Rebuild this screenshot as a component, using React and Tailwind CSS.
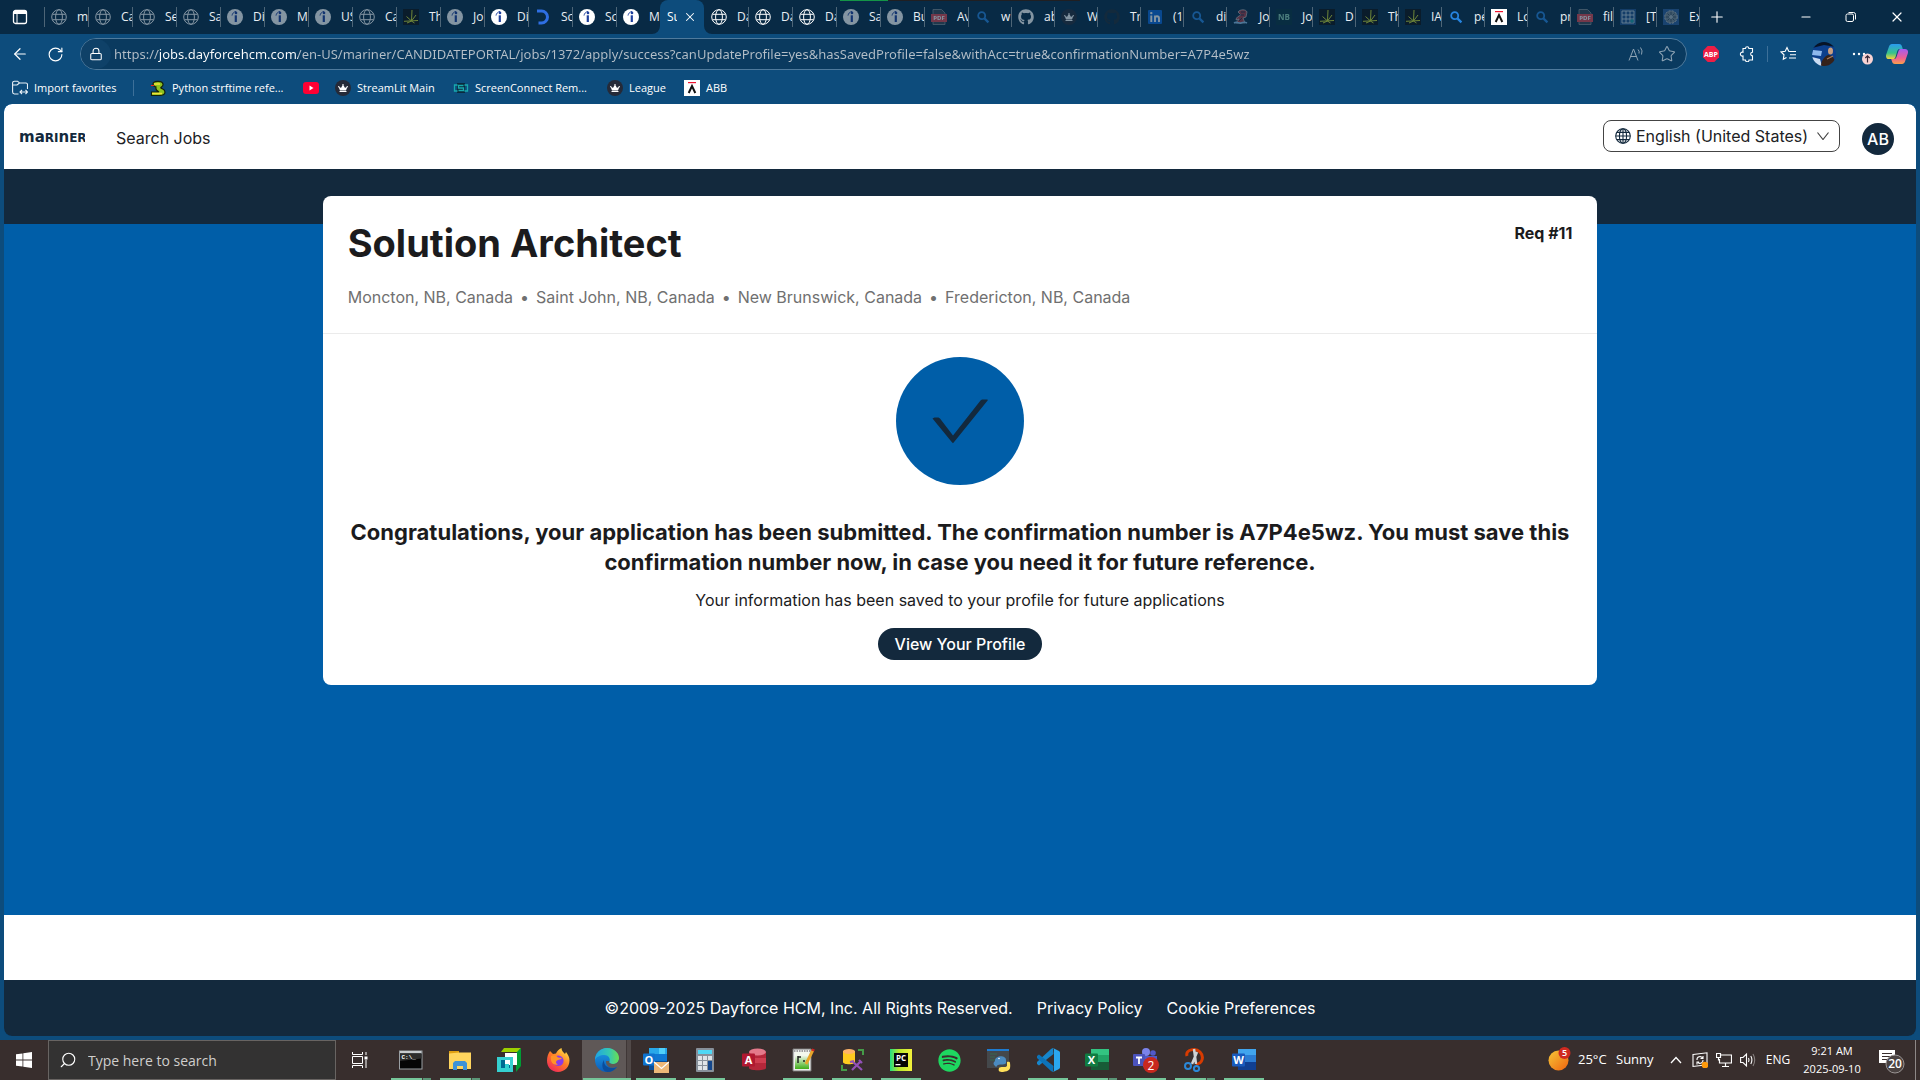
import React from "react";
import { Lock, RotateCw, ArrowLeft, Plus, X, Minus, Star, Search } from "lucide-react";
import { FaGithub, FaSpotify, FaCrown } from "react-icons/fa";

const ui = "font-['Open_Sans','Noto_Sans',sans-serif]";

/* ---------- tab icons ---------- */

const Globe = () => (
  <svg viewBox="0 0 16 16" className="size-4" fill="none" stroke="#fff" strokeWidth="1">
    <circle cx="8" cy="8" r="7.3" />
    <ellipse cx="8" cy="8" rx="3.4" ry="7.3" />
    <path d="M1.5 5.3h13M1.5 10.7h13" />
  </svg>
);

const Indeed = () => (
  <svg viewBox="0 0 16 16" className="size-4">
    <circle cx="8" cy="8" r="8" fill="#fff" />
    <circle cx="9" cy="3.9" r="1.3" fill="#1d3f9c" />
    <path d="M5 6.6c.3-2 1.6-3.7 4-4.2" stroke="#1d3f9c" strokeWidth=".9" fill="none" />
    <path d="M7.7 6.3h2.2V13H7.7z" fill="#1d3f9c" />
  </svg>
);

const Spark = () => (
  <svg viewBox="0 0 16 16" className="size-4">
    <path fill="#0c0f12" d="M0 0h16v16H0z" />
    <path
      d="M9 1l-.5 11M8.500 12L3.500 7.500M8.500 12l4.500-6M1 12.300l14-.8M8.500 12l-4.500 2M8.500 12l3 2"
      stroke="#d3e02e"
      strokeWidth="1"
      fill="none"
    />
  </svg>
);

const Dice = () => (
  <svg viewBox="0 0 16 16" className="size-4" fill="none">
    <path d="M2 2h4.500a6 6 0 0 1 0 12H3.500" stroke="#2f6fe4" strokeWidth="3" />
  </svg>
);

const Pdf = () => (
  <svg viewBox="0 0 16 16" className="size-4">
    <path d="M2 .5h8.500L14 4v11.500H2z" fill="#3b4654" stroke="#8d949b" strokeWidth=".8" />
    <path fill="#e0474f" d="M0 5h16v8H0z" />
    <text x="8" y="11.300" fontSize="6" fontWeight="700" fill="#fff" textAnchor="middle" fontFamily="Open Sans">
      PDF
    </text>
  </svg>
);

const Lens = () => (
  <svg viewBox="0 0 16 16" className="size-4" fill="none" stroke="#2684e0" strokeWidth="1.800">
    <circle cx="6.700" cy="6.700" r="3.500" />
    <path d="M9.400 9.400l4 4" strokeWidth="2.200" />
  </svg>
);

const Github = () => <FaGithub className="size-4 text-white" />;
const GithubDark = () => <FaGithub className="size-4 text-[#1f2a35]" />;
const Linkedin = () => (
  <svg viewBox="0 0 16 16" className="size-4">
    <rect x="1" y="1" width="14" height="14" rx="1" fill="#0a66d8" />
    <path d="M4.300 6.500V13M8 13V6.500M8 9.500c0-3 4-3 4 0V13" stroke="#fff" strokeWidth="1.900" fill="none" />
    <circle cx="4.300" cy="4.100" r="1.200" fill="#fff" />
  </svg>
);

const Crown = () => (
  <span className="flex size-4 items-center justify-center rounded-full bg-[#252a38]">
    <FaCrown className="size-2.5 text-white" />
  </span>
);

const Rex = () => (
  <svg viewBox="0 0 16 16" className="size-4">
    <path d="M5 3c2-3 8-3 9 0l-1 5-3 1 2 5H3l3-4-3 1c0-3 3-4 5-5z" fill="#a33b45" stroke="#c9c9c9" strokeWidth=".7" />
    <path d="M1 14c3-2 5 1 7 0s4-1 6 0" stroke="#8cc0ea" strokeWidth="1.600" fill="none" />
    <path d="M8 3h4M7 6h4M9 9l-3 3" stroke="#222b45" strokeWidth=".9" />
  </svg>
);

const NB = () => (
  <span className="flex size-4 items-center justify-center bg-[#08313e] text-[8px] font-bold text-[#8fd0b5]">NB</span>
);

const Abb = () => (
  <svg viewBox="0 0 16 16" className="size-4">
    <path fill="#fff" d="M0 0h16v16H0z" />
    <path fill="#f0142f" d="M4 2h8v1.200H4z" />
    <path d="M4.700 13L8 6l3.300 7" stroke="#111" strokeWidth="2" fill="none" />
  </svg>
);

const Table = () => (
  <svg viewBox="0 0 16 16" className="size-4">
    <path fill="#20508c" d="M0 0h16v16H0z" />
    <path d="M2 2h12v12H2zM6 2v12M10 2v12M2 6h12M2 10h12" stroke="#c8d6e2" strokeWidth=".9" fill="none" />
    <path fill="#1aa0a8" d="M10.500 10.500h3v3h-3z" />
  </svg>
);

const Gear = () => (
  <svg viewBox="0 0 16 16" className="size-4">
    <path fill="#2a5c9c" d="M0 0h16v16H0z" />
    <circle cx="8" cy="8" r="6.300" fill="#7b8994" stroke="#b9c2c9" strokeDasharray="2 1.300" />
    <path d="M8 3v10M3 8h10M4.500 4.500l7 7M11.500 4.500l-7 7" stroke="#2f4456" strokeWidth=".8" />
    <circle cx="8" cy="8" r="2" fill="#a6b2bb" />
  </svg>
);

const leftTabs = [
  ["m", Globe, 1], ["Ca", Globe, 1], ["Se", Globe, 1], ["Sa", Globe, 1],
  ["Di", Indeed, 1], ["M", Indeed, 1], ["US", Indeed, 1], ["Ca", Globe, 1],
  ["Th", Spark, 1], ["Jo", Indeed, 1], ["Di", Indeed, 0], ["Sc", Dice, 0],
  ["Sc", Indeed, 0], ["M", Indeed, 0],
];
const midTabs = [
  ["Da", Globe, 0], ["Da", Globe, 0], ["Da", Globe, 0],
  ["Sa", Indeed, 1], ["Bu", Indeed, 1], ["Av", Pdf, 1],
];
const rightTabs = [
  ["w", Lens, 1], ["ab", Github, 1], ["W", Crown, 1], ["Tr", GithubDark, 1],
  ["(1", Linkedin, 1], ["di", Lens, 1], ["Jo", Rex, 1], ["Jo", NB, 1],
  ["D", Spark, 1], ["Th", Spark, 1], ["IA", Spark, 1], ["pe", Lens, 0],
  ["Lo", Abb, 0], ["pr", Lens, 1], ["fil", Pdf, 1], ["[T", Table, 1], ["Ex", Gear, 1],
];

function Tab({ tab, narrow, first }) {
  const [label, Icon, asleep] = tab;
  return (
    <button
      type="button"
      className={`flex h-5 shrink-0 items-center gap-2.5 overflow-hidden border-l pl-1.5 text-xs whitespace-nowrap text-[#e8eef3] ${
        narrow ? "w-[43px]" : "w-11"
      } ${first ? "border-transparent" : "border-[#4d6577]"}`}
    >
      <span className={`shrink-0 ${asleep ? "opacity-50" : ""}`}>
        <Icon />
      </span>
      {label}
    </button>
  );
}

function TabStrip() {
  return (
    <div className="relative flex h-[34px] items-center bg-[#082a45] pr-[15px]">
      <span className="absolute top-0 left-[840px] h-px w-12 bg-[#149447]" />
      <span className="absolute top-0 left-[888px] h-px w-48 bg-[#201f22]" />
      <button type="button" aria-label="Tab actions" className="flex w-11 shrink-0 pl-3">
        <svg viewBox="0 0 16 16" className="size-4" fill="none" stroke="#fff" strokeWidth="1.300">
          <rect x="1.500" y="1.500" width="13" height="13" rx="2" />
          <path d="M1.500 3.500h13" strokeWidth="3" />
          <path d="M5 5v9" strokeWidth="1" />
        </svg>
      </button>
      {leftTabs.map((t, i) => <Tab key={i} tab={t} />)}
      <div className="relative flex h-[34px] w-11 shrink-0 items-center gap-1.5 rounded-t-lg bg-[#0d4c7c] pl-[7px] text-xs text-white">
        <svg viewBox="0 0 8 8" className="absolute bottom-0 -left-2 size-2"><path d="M8 0v8H0a8 8 0 0 0 8-8" fill="#0d4c7c" /></svg>
        <svg viewBox="0 0 8 8" className="absolute -right-2 bottom-0 size-2"><path d="M0 0v8h8a8 8 0 0 1-8-8" fill="#0d4c7c" /></svg>
        <span className="w-2.5 overflow-hidden">Su</span>
        <button type="button" aria-label="Close tab"><X className="size-3.5" strokeWidth={1.8} /></button>
      </div>
      {midTabs.map((t, i) => <Tab key={i} tab={t} first={i === 0} />)}
      {rightTabs.map((t, i) => <Tab key={i} tab={t} narrow />)}
      <span className="h-5 w-px shrink-0 bg-[#4d6577]" />
      <button type="button" aria-label="New tab" className="ml-2 shrink-0 text-white"><Plus className="size-[18px]" strokeWidth={1.5} /></button>
      <div className="ml-auto flex items-center gap-8 text-white">
        <button type="button" aria-label="Minimize"><Minus className="size-3.5" strokeWidth={1.8} /></button>
        <button type="button" aria-label="Restore">
          <svg viewBox="0 0 12 12" className="size-3" fill="none" stroke="#fff">
            <rect x="1" y="3" width="7.500" height="7.500" rx="1.500" />
            <path d="M3.500 1.500h5a2 2 0 0 1 2 2v5" />
          </svg>
        </button>
        <button type="button" aria-label="Close"><X className="size-4" strokeWidth={1.8} /></button>
      </div>
    </div>
  );
}

function Toolbar() {
  return (
    <div className="flex h-10 items-center pr-3 pl-[11px] text-white">
      <button type="button" aria-label="Back"><ArrowLeft className="size-[18px]" strokeWidth={1.6} /></button>
      <button type="button" aria-label="Refresh" className="ml-[18px]"><RotateCw className="size-[17px]" strokeWidth={1.6} /></button>
      <div className="ml-4 flex h-8 flex-1 items-center rounded-full border border-[#4f7a9c] bg-[#0a3a5f] pr-2.5">
        <span className="flex size-[30px] items-center justify-center rounded-full bg-[#0f4168]">
          <Lock className="size-3.5" strokeWidth={1.8} />
        </span>
        <input
          aria-label="Address"
          type="text"
          readOnly
          value="https://jobs.dayforcehcm.com/en-US/mariner/CANDIDATEPORTAL/jobs/1372/apply/success?canUpdateProfile=yes&hasSavedProfile=false&withAcc=true&confirmationNumber=A7P4e5wz"
          className="ml-[3px] h-6 flex-1 bg-[linear-gradient(to_right,#b5bfc8_44px,#ffffff_44px,#ffffff_184px,#b5bfc8_184px)] bg-clip-text font-['Noto_Sans',sans-serif] text-[13px] text-transparent outline-none"
        />
        <button type="button" aria-label="Read aloud">
          <svg viewBox="0 0 16 16" className="size-4" fill="none" stroke="#8ea3b4">
            <path d="M1 14.500L5.500 3 10 14.500M2.500 10.500h6M10 3.500a4 4 0 0 1 1 4M12.500 1.500a7 7 0 0 1 1 7" />
          </svg>
        </button>
        <button type="button" aria-label="Add favorite" className="ml-3.5"><Star className="size-[18px] text-[#8ea3b4]" strokeWidth={1.4} /></button>
      </div>
      <button type="button" aria-label="Adblock Plus" className="ml-4">
        <svg viewBox="0 0 16 16" className="size-4">
          <path d="M4.700 0h6.600L16 4.700v6.600L11.300 16H4.700L0 11.300V4.700z" fill="#ed1e45" />
          <text x="8" y="10.500" fontSize="7" fontWeight="700" textAnchor="middle" fill="#fff" fontFamily="Open Sans">ABP</text>
        </svg>
      </button>
      <button type="button" aria-label="Extensions" className="ml-5">
        <svg viewBox="0 0 16 16" className="size-4" fill="none" stroke="#fff" strokeWidth="1.100">
          <path d="M4 2.500h2.500a1.700 1.700 0 0 1 3.400 0h3.600v3.700a1.700 1.700 0 1 0 0 3.600v4.200H10a1.700 1.700 0 0 1-3.500 0H4v-4a2 2 0 1 1 0-3.800z" />
        </svg>
      </button>
      <span className="ml-3 h-4 w-px bg-[#3d7099]" />
      <button type="button" aria-label="Favorites" className="ml-3">
        <svg viewBox="0 0 16 16" className="size-4" fill="none" stroke="#fff" strokeWidth="1.100">
          <path d="M10 5.500l-1.300-.2L7 1.500 5.200 5.300l-4.200.6 3 2.900-.7 4.500L6.500 11.500M10 5.500h6M10 8.700h6M9 12h7" />
        </svg>
      </button>
      <button type="button" aria-label="Profile" className="ml-4">
        <svg viewBox="0 0 24 24" className="size-6">
          <defs><clipPath id="face"><circle cx="12" cy="12" r="12" /></clipPath></defs>
          <g clipPath="url(#face)">
            <path fill="#0c3f8c" d="M0 0h24v24H0z" />
            <path fill="#071426" d="M0 0h24v5L12 3 0 6z" />
            <path d="M1 8l9 1-1 5-9-1z" fill="#8db8ec" />
            <path d="M0 15l8 2 2 7H0z" fill="#c9dcf2" />
            <path d="M9 24c0-5 3-9 7-11 4 0 7 3 8 11z" fill="#35221a" />
            <ellipse cx="18.500" cy="9" rx="2.500" ry="3.500" fill="#c99e80" />
            <path d="M15 17l6-3" stroke="#a87a5c" strokeWidth="1.300" />
          </g>
        </svg>
      </button>
      <button type="button" aria-label="Settings and more" className="relative ml-3.5 flex h-6 w-6 items-center">
        <svg viewBox="0 0 24 24" className="size-6">
          <circle cx="4" cy="12" r="1.200" fill="#fff" /><circle cx="9" cy="12" r="1.200" fill="#fff" /><circle cx="14" cy="12" r="1.200" fill="#fff" />
          <circle cx="17.500" cy="17" r="5.500" fill="#f8d3d3" />
          <path d="M17.500 20.500v-6.500M15.300 16l2.200-2.200 2.200 2.200" stroke="#3a2a3a" strokeWidth="1.200" fill="none" />
        </svg>
      </button>
      <button type="button" aria-label="Copilot" className="ml-3">
        <svg viewBox="0 0 22 20" className="h-5 w-[22px]">
          <defs>
            <linearGradient id="cpA" x1="0" y1="0" x2="0" y2="1"><stop offset="0" stopColor="#2a9bf0" /><stop offset=".6" stopColor="#37c28a" /><stop offset="1" stopColor="#f5d23a" /></linearGradient>
            <linearGradient id="cpB" x1="0" y1="0" x2="0" y2="1"><stop offset="0" stopColor="#a35cf0" /><stop offset=".6" stopColor="#ee5f93" /><stop offset="1" stopColor="#fba04a" /></linearGradient>
          </defs>
          <path d="M6 0h7c2 0 2.500 1 3 2.500l.8 2.500h-3c-1.500 0-2 .8-2.500 2L9.500 13c-.6 1.500-1 2-2.500 2H3c-2.500 0-3.500-2-2.800-4.500L3 2.500C3.500 1 4.500 0 6 0z" fill="url(#cpA)" />
          <path d="M16 20H9c-2 0-2.500-1-3-2.500L5.200 15H8c1.500 0 2-.8 2.500-2L12.500 7c.6-1.500 1-2 2.500-2h4c2.500 0 3.500 2 2.800 4.500L19 17.500c-.5 1.500-1.500 2.500-3 2.500z" fill="url(#cpB)" />
        </svg>
      </button>
    </div>
  );
}

function Favorite({ label, children, className }) {
  return (
    <a href="#fav" className={`flex shrink-0 items-center gap-1.5 whitespace-nowrap ${className}`} aria-label={label || "YouTube"}>
      {children}
      {label}
    </a>
  );
}

function Favorites() {
  return (
    <nav className="flex h-[30px] items-center pl-3 pb-0.5 text-[11px] text-white">
      <Favorite label="Import favorites" className="w-[121px]">
        <svg viewBox="0 0 16 16" className="size-4" fill="none" stroke="#e8f0f6" strokeWidth="1.100">
          <path d="M6.500 14H2.500A2 2 0 0 1 .6 12V3A1.800 1.800 0 0 1 2.500 1.200h3L7.500 3H14a1.600 1.600 0 0 1 1.500 1.600V9M.6 5H5L7.500 3M8 12h7.500M13.500 10l2 2-2 2M10 10l-2 2 2 2" />
        </svg>
      </Favorite>
      <span className="h-4 w-px bg-[#3d7099]" />
      <Favorite label="Python strftime refe..." className="ml-4 w-[153px]">
        <svg viewBox="0 0 16 16" className="size-4">
          <path d="M3 4c0-3 9-4 10 0 .5 3-3 3-2 4s4 1 4 4-3 3.500-6 3.500H1.500V12H9c-2-1-4-2-3-5C4 6.500 3 6 3 4z" fill="#8cc21f" stroke="#15200a" strokeWidth="1.200" />
          <path d="M4 4h6M2 13.500h10" stroke="#f2e13a" strokeWidth="1.400" />
          <path d="M1 5.500h3" stroke="#e22" />
        </svg>
      </Favorite>
      <Favorite className="w-8">
        <svg viewBox="0 0 16 12" className="h-3 w-4"><rect width="16" height="12" rx="3" fill="#ff0033" /><path d="M6.500 3.500v5l4-2.500z" fill="#fff" /></svg>
      </Favorite>
      <Favorite label="StreamLit Main" className="w-[118px]"><Crown /></Favorite>
      <Favorite label="ScreenConnect Rem..." className="w-[154px]">
        <svg viewBox="0 0 16 16" className="size-4" fill="none">
          <path d="M4 3h8v10H4z" fill="#0a2a3d" /><path d="M4.500 5H1.500v6h3M11.500 11h3V5h-3M10.500 5.500h-5v2.500h5v2.500h-5" stroke="#18a9ad" strokeWidth="1.300" />
        </svg>
      </Favorite>
      <Favorite label="League" className="w-[77px]"><Crown /></Favorite>
      <Favorite label="ABB" className="w-12"><Abb /></Favorite>
    </nav>
  );
}

/* ---------- page ---------- */

function SiteHeader() {
  return (
    <header className="flex h-[65px] items-center rounded-t-lg bg-white pr-[22px] pl-[15px] text-[#202124]">
      <a href="#home" aria-label="Mariner" className="flex w-[66px] items-center pt-0.5">
        <svg viewBox="0 0 66 12" className="h-3 w-[66px]">
          <text x="0" y="10" fill="#13293d" fontFamily="DejaVu Sans" fontWeight="700">
            <tspan fontSize="15">ma</tspan><tspan fontSize="12">RI</tspan><tspan fontSize="15">n</tspan><tspan fontSize="12">ER</tspan>
          </text>
        </svg>
      </a>
      <a href="#jobs" className="ml-[31px] pt-0.5 text-base">Search Jobs</a>
      <div className="ml-auto flex items-center gap-[22px]">
        <label className="mb-0.5 flex h-8 items-center rounded-lg border border-[#444] pr-2.5 pl-[11px]">
          <svg viewBox="0 0 16 16" className="size-4" fill="none" stroke="#13293d" strokeWidth="1.100">
            <circle cx="8" cy="8" r="7.300" /><ellipse cx="8" cy="8" rx="3.600" ry="7.300" /><path d="M8 1v14M.7 8h14.600M1.800 4.400h12.400M1.800 11.600h12.400" />
          </svg>
          <select aria-label="Language" className="ml-[5px] w-[181px] appearance-none bg-transparent text-base outline-none">
            <option>English (United States)</option>
          </select>
          <svg viewBox="0 0 12 8" className="h-2 w-3" fill="none" stroke="#444" strokeWidth="1.200"><path d="M.5.5L6 7.500 11.500.5" /></svg>
        </label>
        <button type="button" className="mt-1 size-8 rounded-full bg-[#13293d] text-base font-medium text-white">AB</button>
      </div>
    </header>
  );
}

function Page() {
  return (
    <main className="flex flex-1 flex-col overflow-hidden rounded-lg bg-[#005ea8] font-[Inter,sans-serif] text-[#1b1b1d]">
      <SiteHeader />
      <div className="flex-1 bg-[linear-gradient(#13293d_55px,#005ea8_55px)] pt-[27px]">
        <section className="mx-auto w-2/3 rounded-lg bg-white">
          <div className="flex h-[138px] items-start justify-between border-b border-[#ebebeb] px-[25px] pt-5">
            <div>
              <h1 className="text-[38px] leading-[54px] font-bold">Solution Architect</h1>
              <ul className="mt-[15px] flex gap-[7px] text-base text-[#707070]">
                {["Moncton, NB, Canada", "Saint John, NB, Canada", "New Brunswick, Canada", "Fredericton, NB, Canada"].map((l, i) => (
                  <li key={l} className="flex gap-[7px]">{i > 0 && <span>•</span>}{l}</li>
                ))}
              </ul>
            </div>
            <p className="pt-[5px] text-base font-bold">Req #11</p>
          </div>
          <div className="flex flex-col items-center px-6 pt-[23px] pb-[25px] text-center">
            <svg viewBox="0 0 128 128" className="size-32">
              <circle cx="64" cy="64" r="64" fill="#005ea8" />
              <path d="M36.500 61.500l2-1h4l1.500 1L57 78.500 84.500 43.500l1.500-1h5.500l.3.800L58.500 84.500 57 86.200l-1.500-1.500z" fill="#13293d" />
            </svg>
            <h2 className="mt-8 text-[22px] leading-[30px] font-bold">
              Congratulations, your application has been submitted. The confirmation number is A7P4e5wz. You must save this
              confirmation number now, in case you need it for future reference.
            </h2>
            <p className="mt-[11px] text-base">Your information has been saved to your profile for future applications</p>
            <button type="button" className="mt-4 h-8 rounded-full bg-[#13293d] px-[17px] text-base font-medium text-white">View Your Profile</button>
          </div>
        </section>
      </div>
      <div className="h-[65px] bg-white" />
      <footer className="flex h-14 items-center justify-center gap-6 bg-[#13293d] text-base text-white">
        <span>©2009-2025 Dayforce HCM, Inc. All Rights Reserved.</span>
        <a href="#privacy">Privacy Policy</a>
        <a href="#cookies">Cookie Preferences</a>
      </footer>
    </main>
  );
}

/* ---------- taskbar ---------- */

const Office = ({ letter, dark, mid, light, badge, children }) => (
  <svg viewBox="0 0 24 24" className="size-6">
    <path fill={light} d="M6 1h18v7H6z" />
    <path fill={mid} d="M6 7h18v8H6z" />
    <path fill={dark} d="M6 14h18v8H6z" />
    <rect y="5.500" width="13" height="13" rx="1" fill={badge} />
    <text x="6.500" y="15.800" fontSize="11" fontWeight="700" textAnchor="middle" fill="#fff" fontFamily="Open Sans">{letter}</text>
    {children}
  </svg>
);

const Cmd = () => (
  <svg viewBox="0 0 24 24" className="size-6">
    <path fill="#9aa0a4" d="M0 2.500h23.500v19H0z" /><path fill="#c8cccf" d="M1 3h21v2H1z" />
    <path fill="#050505" d="M1 5.500h21.500v15H1z" /><path d="M1 5.500h21.500v5L1 13z" fill="#2d2d2d" />
    <text x="2.500" y="11" fontSize="6" fontWeight="700" fill="#fff" fontFamily="Liberation Mono">C:\_</text>
  </svg>
);
const Explorer = () => (
  <svg viewBox="0 0 24 24" className="size-6">
    <path fill="#e0a012" d="M1 3h10v5H1z" /><path fill="#ffd55e" d="M1 5.500l10-1h12V21H1z" />
    <path d="M5 22v-7l2-2h10l2 2v7h-4v-4H9v4z" fill="#3f93d8" />
  </svg>
);
const Cube = () => (
  <svg viewBox="0 0 24 24" className="size-6">
    <path fill="#9ed000" d="M7 0h17l-3.500 4H4z" /><path fill="#009c35" d="M24 0v18l-5 6V5z" />
    <path fill="#fff" d="M8 5h12v12H8z" /><path fill="#35d0d0" d="M0 9h16v15H0z" />
    <path fill="#006a91" d="M4 12h9v8H4z" /><path fill="#fff" d="M8 12h5v5H8z" /><path fill="#35d0d0" d="M8 16h4v4H8z" />
  </svg>
);
const Firefox = () => (
  <svg viewBox="0 0 24 24" className="size-6">
    <defs><linearGradient id="ff" x1=".9" y1="0" x2=".2" y2="1"><stop offset="0" stopColor="#fff04a" /><stop offset=".5" stopColor="#ff7a26" /><stop offset="1" stopColor="#f0245c" /></linearGradient></defs>
    <path d="M4 3l3 3 3-.5C11 3 13 1 15.500 0c0 3 2 4 3.500 6l1-2c2 2.500 3.500 5 3.500 8.500C23.500 19 18.500 24 12 24S.8 19 1 12.500C1 9 2 6 4 3z" fill="url(#ff)" />
    <circle cx="12.300" cy="12.800" r="5.300" fill="#8a3be6" />
    <path d="M5 8c3-1.500 5-.5 7 1.500l4 .5c-1 1.800-3 1.600-4.500 2.200S9 15 12 16.500c-5 1.500-8-3-7-8.500z" fill="#ff9328" />
  </svg>
);
const Edge = () => (
  <svg viewBox="0 0 24 24" className="size-6">
    <defs>
      <linearGradient id="e1" x1="0" x2="1"><stop offset="0" stopColor="#1fa4e4" /><stop offset=".6" stopColor="#36c9b0" /><stop offset="1" stopColor="#6be04f" /></linearGradient>
      <linearGradient id="e2" x1="0" y1="0" x2="0" y2="1"><stop offset="0" stopColor="#1da0e8" /><stop offset="1" stopColor="#0c5cb8" /></linearGradient>
    </defs>
    <circle cx="12" cy="12" r="12" fill="url(#e2)" />
    <path d="M0 12C0 5 5.500 0 12 0s12 4.500 12 10c0 4-3 6-6 6-3.500 0-4.500-1.500-3.500-3S14 7 9.500 7C5 7 1 9 0 12z" fill="url(#e1)" />
    <path d="M9 12c-.5 5 3 8 8 8 2 0 3.500-.6 5-1.300C20 22 16 24 12.500 24 7 23.500 6 16 9 12z" fill="#0b4d9c" />
    <path d="M14.500 13c-1 1.500 0 3 3.500 3 3 0 5-1.500 6-4.500l.5 6-3 1.500c-5 2-11-.5-10.500-6z" fill="#5f5857" />
  </svg>
);
const Outlook = () => (
  <svg viewBox="0 0 26 26" className="size-[26px]">
    <path fill="#28a8ea" d="M6 1h18v7H6z" /><path fill="#0f78d4" d="M6 7h18v8H6z" /><path fill="#0a4f9c" d="M6 14h18v9H6z" />
    <rect y="6.500" width="12" height="12" rx="1" fill="#0f73cf" />
    <text x="6" y="16.500" fontSize="11" fontWeight="700" textAnchor="middle" fill="#fff" fontFamily="Open Sans">O</text>
    <path fill="#50d0fa" d="M16 1h6v6h-6z" /><path fill="#eeb878" d="M11 15h15v11H11z" /><path d="M11 15l7.500 6.500L26 15" stroke="#fff" fill="none" strokeWidth="1.300" />
  </svg>
);
const Calc = () => (
  <svg viewBox="0 0 24 24" className="size-6">
    <rect x="3" width="18" height="24" rx="1" fill="#87909a" /><path fill="#4fd8f5" d="M5 2h14v4H5z" />
    <path fill="#dfe4e8" d="M5 8h4v4H5zM10 8h4v4h-4zM15 8h4v4h-4zM5 13h4v4H5zM10 13h4v4h-4zM5 18h4v4H5zM10 18h4v4h-4z" /><path fill="#14478c" d="M15 13h4v9h-4z" />
  </svg>
);
const Access = () => (
  <svg viewBox="0 0 24 24" className="size-6">
    <path d="M7 4v16c0 3 17 3 17 0V4z" fill="#b5273a" /><path d="M7 10h17v5H7z" fill="#cf3d50" /><ellipse cx="15.500" cy="4" rx="8.500" ry="3.500" fill="#e4798a" />
    <rect y="5.500" width="13" height="13" rx="1" fill="#b01830" /><text x="6.500" y="15.800" fontSize="11" fontWeight="700" textAnchor="middle" fill="#fff" fontFamily="Open Sans">A</text>
  </svg>
);
const Notepad = () => (
  <svg viewBox="0 0 24 24" className="size-6">
    <defs><linearGradient id="np" x1="0" y1="0" x2="0" y2="1"><stop offset=".2" stopColor="#f4f8ee" /><stop offset="1" stopColor="#3fae18" /></linearGradient></defs>
    <path d="M2 1h18v22H2z" fill="#eee" stroke="#777" /><path fill="url(#np)" d="M4 4h14v17H4z" />
    <path d="M3 3h16" stroke="#555" strokeDasharray="1.500 1" /><path d="M7 8v7M7 9h3M12 13h2M15 13h2" stroke="#222" strokeWidth="1.500" /><path d="M22 2l-7 14" stroke="#e8a52a" strokeWidth="2.800" /><path d="M22.500 1l-.8 2" stroke="#c22" strokeWidth="2.800" />
  </svg>
);
const Ssms = () => (
  <svg viewBox="0 0 24 24" className="size-6">
    <path d="M3 3v11c0 3 12 3 12 0V3z" fill="#ffcb1f" /><ellipse cx="9" cy="3.500" rx="6" ry="2.500" fill="#ffb469" />
    <path d="M18 2h5v5M2 17v5h5" stroke="#459b48" strokeWidth="2" fill="none" /><path d="M12 22l9-9M12 13l10 9M10 14l4-1M19 12l3 3" stroke="#9350b8" strokeWidth="2.200" />
  </svg>
);
const PyCharm = () => (
  <svg viewBox="0 0 24 24" className="size-6">
    <defs><linearGradient id="pc" x1="0" y1="0" x2="1" y2="0"><stop offset="0" stopColor="#22dd80" /><stop offset=".4" stopColor="#b5e82c" /><stop offset="1" stopColor="#f3f03c" /></linearGradient></defs>
    <path fill="url(#pc)" d="M1 1h22v22H1z" /><path fill="#050505" d="M5 5h14v14H5z" />
    <text x="12" y="12.500" fontSize="8" fontWeight="700" textAnchor="middle" fill="#fff" fontFamily="Open Sans">PC</text><path fill="#fff" d="M6.500 16h5v1.300h-5z" />
  </svg>
);
const Spotify = () => (
  <span className="flex size-6 items-center justify-center"><FaSpotify className="size-[23px] text-[#1ed760]" /></span>
);
const Python = () => (
  <svg viewBox="0 0 24 24" className="size-6">
    <path fill="#44484b" d="M0 1h22v19H0z" /><path fill="#1e7bd0" d="M0 1h22v2H0z" /><path d="M3 6h7M3 9h5M3 12h6" stroke="#376650" />
    <path d="M8 13c0-6 11-6 11-1v3c0 2-6 1-8 2s-1 3-3 1-2-3 0-5z" fill="#4b8bc0" /><path d="M23 15c1 7-1 8-7 9-4 0-5-1-4-4 1-2 7 0 8-2v-4c2-.5 3 0 3 1z" fill="#ffe05a" /><circle cx="12" cy="10.500" r=".8" fill="#fff" />
  </svg>
);
const VsCode = () => (
  <svg viewBox="0 0 24 24" className="size-6">
    <path d="M17 0l-2 1L1 14v2l2 1.500L17.500 6z" fill="#1686cc" /><path d="M17 24l-2-1L1 10V8l2-1.500L17.500 18z" fill="#0d73b8" /><path d="M17 0l6 3c.6.300 1 1 1 1.500v15c0 .5-.4 1.200-1 1.500l-6 3c1-1 1-1.500 1-2.500v-19c0-1 0-1.500-1-2.500z" fill="#2aa7f0" />
  </svg>
);
const Excel = () => <Office letter="X" light="#33c481" mid="#21a366" dark="#185c37" badge="#107c41" />;
const Word = () => <Office letter="W" light="#41a5ee" mid="#2b7cd3" dark="#103f91" badge="#185abd" />;
const Teams = () => (
  <svg viewBox="0 0 26 26" className="size-[26px]">
    <circle cx="13" cy="5" r="4" fill="#7b83eb" /><circle cx="20" cy="6" r="2.800" fill="#5059c9" /><path d="M9 9h15v9c0 4-12 6-15 0z" fill="#5059c9" />
    <rect y="7" width="12" height="12" rx="1" fill="#4b53bc" /><path d="M3 10.500h6M6 10.500V17" stroke="#fff" strokeWidth="1.800" />
    <circle cx="18" cy="18" r="8" fill="#c8281e" /><text x="18" y="22.500" fontSize="12" textAnchor="middle" fill="#fff" fontFamily="Open Sans">2</text>
  </svg>
);
const Snip = () => (
  <svg viewBox="0 0 24 24" className="size-6">
    <path d="M4 8C2 1 13 0 17 4s3 12-4 12" stroke="#d83b01" strokeWidth="3" fill="none" /><path d="M11 1l2 15M14 4l-5 12" stroke="#cfd3d6" strokeWidth="2.500" />
    <circle cx="5" cy="18" r="3" stroke="#2b88d8" strokeWidth="2" fill="none" /><circle cx="13.500" cy="20.500" r="2.600" stroke="#2b88d8" strokeWidth="2" fill="none" />
  </svg>
);

const apps = [
  ["Command Prompt", Cmd, "stack"], ["File Explorer", Explorer, "stack"], ["Cube", Cube, ""],
  ["Firefox", Firefox, ""], ["Edge", Edge, "active"], ["Outlook", Outlook, "open"],
  ["Calculator", Calc, "open"], ["Access", Access, ""], ["Notepad++", Notepad, "open"],
  ["Management Studio", Ssms, "open"], ["PyCharm", PyCharm, "open"], ["Spotify", Spotify, ""],
  ["Python", Python, ""], ["Visual Studio Code", VsCode, "open"], ["Excel", Excel, "stack"],
  ["Teams", Teams, "open"], ["Snipping Tool", Snip, "stack"], ["Word", Word, "open"],
];

const underline = {
  "": "w-10",
  open: "w-10 bg-[#76c699]",
  stack: "w-10 bg-[linear-gradient(to_right,#76c699_31px,#4a3f3f_31px,#4a3f3f_32px,#5b9677_32px)]",
  active: "w-12 bg-[#76c699]",
};

function Taskbar() {
  return (
    <footer className="flex h-10 items-stretch bg-[#382e2d] text-white">
      <button type="button" aria-label="Start" className="flex w-12 items-center justify-center">
        <svg viewBox="0 0 16 16" className="size-4" fill="#fff"><path d="M0 2.300L6.500 1.400v6.200H0zM7.300 1.300L16 0v7.600H7.300zM0 8.400h6.500v6.200L0 13.700zM7.300 8.400H16V16l-8.700-1.300z" /></svg>
      </button>
      <label className="flex w-72 items-center border border-[#686462] bg-[#333232] pl-2.5">
        <Search className="size-[18px] -scale-x-100" strokeWidth={1.5} />
        <input type="text" placeholder="Type here to search" aria-label="Search" className="ml-[11px] w-52 bg-transparent text-[14px] outline-none placeholder:text-[#d0cecd]" />
      </label>
      <button type="button" aria-label="Task view" className="ml-4 w-4">
        <svg viewBox="0 0 16 16" className="size-4" fill="none" stroke="#fff"><path d="M.5 0v2.500h10V0M.5 16v-2.500h10V16M.5 4.500h10v7H.5zM14 0v3M14 8v8" /><path fill="#fff" stroke="none" d="M12.500 4.500h3v3h-3z" /></svg>
      </button>
      <div className="ml-[18px] flex">
        {apps.map(([name, Icon, state]) => (
          <button
            key={name}
            type="button"
            aria-label={name}
            className={`flex w-[49px] flex-col items-center justify-between ${state === "active" ? "bg-[linear-gradient(to_right,#5f5857_44px,#3f3736_44px,#3f3736_45px,#514948_45px)]" : ""}`}
          >
            <span className="flex h-[38px] items-center pt-0.5"><Icon /></span>
            <span className={`h-0.5 ${underline[state]}`} />
          </button>
        ))}
      </div>
      <div className="ml-auto flex items-center text-[13px]">
        <svg viewBox="0 0 24 28" className="h-7 w-6">
          <defs><linearGradient id="sun" x1="0" y1="0" x2="1" y2="1"><stop offset="0" stopColor="#f6c637" /><stop offset="1" stopColor="#f0640f" /></linearGradient></defs>
          <circle cx="10.500" cy="14.500" r="10" fill="url(#sun)" /><circle cx="16.500" cy="7" r="6" fill="#cf2a20" />
          <text x="16.500" y="10.200" fontSize="9" fontWeight="600" textAnchor="middle" fill="#fff" fontFamily="Open Sans">5</text>
        </svg>
        <span className="ml-1.5 w-[38px]">25°C</span>
        <span className="w-[54px]">Sunny</span>
        <svg viewBox="0 0 12 8" className="h-2 w-3" fill="none" stroke="#fff" strokeWidth="1.300"><path d="M1 7l5-5.500L11 7" /></svg>
        <svg viewBox="0 0 16 16" className="ml-2.5 size-4" fill="none" stroke="#fff" strokeWidth="1.100"><path d="M1 2.500L15 .8v12L1 14.500zM5 8a3 3 0 0 1 5.500-2M11 4v2.500H8.500M11 8a3 3 0 0 1-5 2.500M5 12.500V10h2" /><circle cx="13" cy="13" r="3.300" fill="#ff9a0c" stroke="none" /></svg>
        <svg viewBox="0 0 16 16" className="ml-2 size-4" fill="none" stroke="#fff" strokeWidth="1.200"><path d="M5 3h10.500v8H3.500V7M9.500 11v3.500M6 14.500h7M.5 1.500h4v4h-4zM2.500 5.500v3" /></svg>
        <svg viewBox="0 0 16 16" className="ml-2 size-4" fill="none" stroke="#fff" strokeWidth="1.100"><path d="M.6 5.500H3L6.500 2v12L3 10.500H.6zM8.500 6q1 2 0 4M10.800 4q2.200 4 0 8" /><path d="M13 2q3.400 6 0 12" stroke="#857e7d" /></svg>
        <span className="w-11 text-center text-xs">ENG</span>
        <div className="mr-2.5 w-16 text-center text-[11px] leading-[18px]"><p>9:21 AM</p><p>2025-09-10</p></div>
        <svg viewBox="0 0 28 28" className="ml-1 h-7 w-7">
          <path d="M1 4h16v13h-4l-3 3v-3H1z" fill="#fff" /><path d="M4 7.500h10M4 10.500h10M4 13.500h6" stroke="#382e2d" />
          <circle cx="17" cy="18" r="9" fill="#4a4241" stroke="#9a9594" />
          <text x="17" y="22" fontSize="12" fontWeight="600" textAnchor="middle" fill="#fff" fontFamily="Open Sans">20</text>
        </svg>
        <span className="ml-[9px] h-10 w-[5px] border-l border-[#8d8887]" />
      </div>
    </footer>
  );
}

export default function App() {
  return (
    <div className={`flex min-h-screen flex-col bg-[#0d4c7c] ${ui}`}>
      <TabStrip />
      <Toolbar />
      <Favorites />
      <div className="flex flex-1 flex-col px-1 pb-1">
        <Page />
      </div>
      <Taskbar />
    </div>
  );
}
